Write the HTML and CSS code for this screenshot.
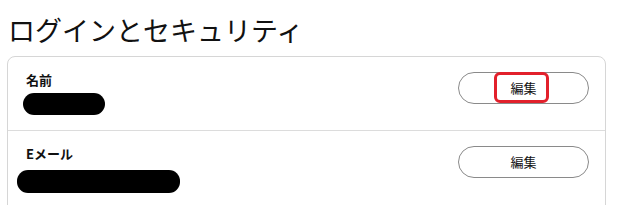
FILE: index.html
```html
<!DOCTYPE html>
<html lang="ja">
<head>
  <meta charset="UTF-8" />
  <meta name="viewport" content="width=device-width, initial-scale=1.0"/>
  <title>ログインとセキュリティ</title>
  <link rel="stylesheet" href="styles.css">
</head>
<body>
  <h1 class="page-title">ログインとセキュリティ</h1>
  <div class="settings-card">
    <div class="settings-row">
      <div class="row-info">
        <div class="row-label">名前</div>
        <div class="redact redact-name"></div>
      </div>
      <button class="edit-btn">編集<span class="highlight"></span></button>
    </div>
    <div class="settings-row">
      <div class="row-info">
        <div class="row-label">Eメール</div>
        <div class="redact redact-mail"></div>
      </div>
      <button class="edit-btn">編集</button>
    </div>
  </div>
</body>
</html>
```

FILE: styles.css
```css
body {
  margin: 0;
  padding: 10px 7px 0;
  font-family: "Noto Sans CJK JP", "Noto Sans", sans-serif;
  background: #fff;
  color: #111;
  overflow: hidden;
}

.page-title {
  margin: 0 0 7px 1px;
  font-size: 27px;
  font-weight: 400;
  line-height: 39px;
}

.settings-card {
  width: 597px;
  padding-bottom: 40px;
  border: 1px solid #d6d6d6;
  border-radius: 8px;
}

.settings-row {
  display: flex;
  justify-content: space-between;
  align-items: flex-start;
  padding: 14px 16px 15px 18px;
  border-bottom: 1px solid #dcdcdc;
}

.row-label {
  font-size: 13px;
  font-weight: 700;
  line-height: 18px;
}

.redact {
  background: #000;
  height: 22px;
  border-radius: 11px;
}

.redact-name {
  width: 82px;
  margin: 4px 0 0 -3px;
}

.redact-mail {
  width: 163px;
  height: 23px;
  margin: 7px 0 -3px -9px;
}

.edit-btn {
  position: relative;
  width: 131px;
  height: 32px;
  margin-top: 1px;
  padding: 0 0 2px;
  background: #fff;
  border: 1px solid #8a8a8a;
  border-radius: 16px;
  font-family: inherit;
  font-size: 13px;
  color: #111;
  cursor: pointer;
}

.highlight {
  position: absolute;
  top: -1px;
  left: 35px;
  width: 55px;
  height: 31px;
  box-sizing: border-box;
  border: 3px solid #e2202b;
  border-radius: 6px;
}
```
